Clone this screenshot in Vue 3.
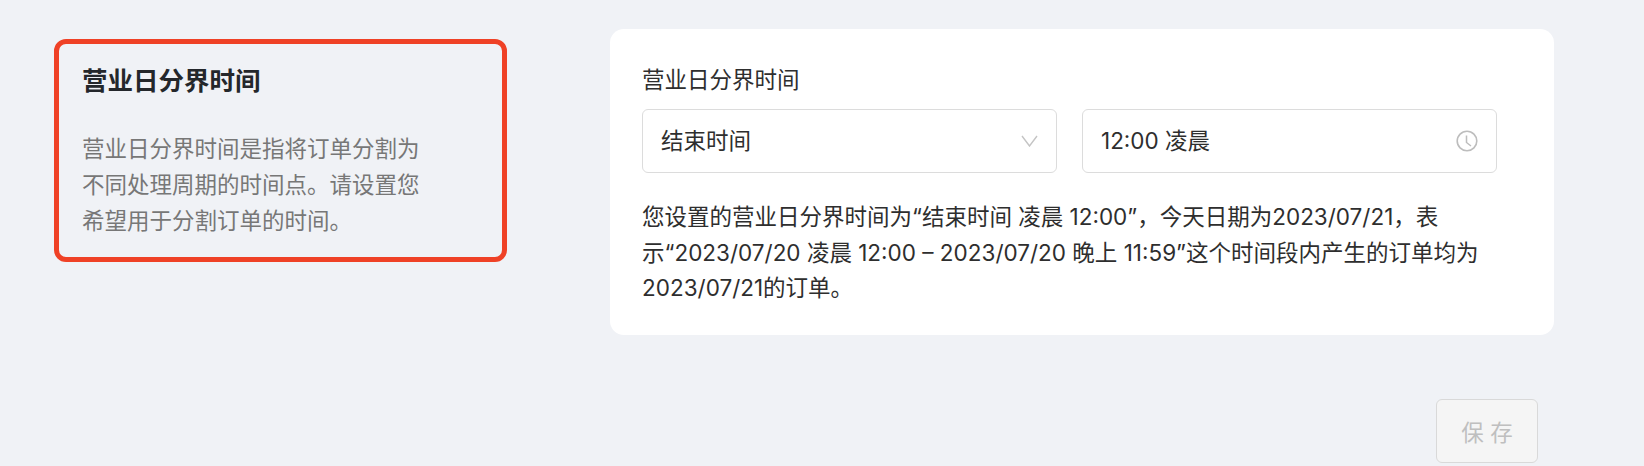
<template>
  <div class="page">
    <div class="setting-row">
      <div class="intro-box">
        <h3 class="intro-title">营业日分界时间</h3>
        <p class="intro-text">营业日分界时间是指将订单分割为不同处理周期的时间点。请设置您希望用于分割订单的时间。</p>
      </div>

      <div class="form-card">
        <div class="form-label">营业日分界时间</div>
        <div class="input-group">
          <div class="field select-field">
            <span>结束时间</span>
            <svg class="arrow" width="17" height="12" viewBox="0 0 17 12" fill="none">
              <path d="M1 1 L8.5 11 L16 1" stroke="#c4c4c4" stroke-width="1.4" />
            </svg>
          </div>
          <div class="field time-field">
            <span>12:00 凌晨</span>
            <svg class="clock" width="22" height="22" viewBox="0 0 22 22" fill="none">
              <circle cx="11" cy="11" r="9.8" stroke="#bdbdbd" stroke-width="1.6" />
              <path d="M10.5 5.5 V12.5 L15 16" stroke="#bdbdbd" stroke-width="1.5" />
            </svg>
          </div>
        </div>
        <p class="form-desc">{{ description }}</p>
      </div>
    </div>

    <div class="footer">
      <button type="button" class="save-btn" disabled>保 存</button>
    </div>
  </div>
</template>

<script setup>
const description = '您设置的营业日分界时间为“结束时间 凌晨 12:00”，今天日期为2023/07/21，表示“2023/07/20 凌晨 12:00 – 2023/07/20 晚上 11:59”这个时间段内产生的订单均为2023/07/21的订单。'
</script>

<style>
html,
body {
  margin: 0;
  background: #f0f2f6;
}
</style>

<style scoped>
.page {
  width: 1644px;
  height: 466px;
  box-sizing: border-box;
  padding: 29px 90px 0 54px;
  background: #f0f2f6;
  overflow: hidden;
  font-family: Inter, "Noto Sans CJK SC", sans-serif;
  color: #2e2e2e;
}

.setting-row {
  display: flex;
  align-items: flex-start;
  gap: 103px;
}

.intro-box {
  width: 453px;
  height: 223px;
  margin-top: 10px;
  flex-shrink: 0;
  box-sizing: border-box;
  padding: 20px 23px;
  border: 5.5px solid #ef4126;
  border-radius: 12px;
}

.intro-title {
  margin: 0 0 33px;
  font-size: 25.5px;
  line-height: 34px;
  font-weight: 700;
  color: #24272b;
}

.intro-text {
  margin: 0;
  width: 345px;
  font-size: 22.5px;
  line-height: 36px;
  color: #777;
}

.form-card {
  width: 944px;
  height: 306px;
  box-sizing: border-box;
  padding: 34px 32px 0;
  background: #fff;
  border-radius: 14px;
}

.form-label {
  font-size: 22.5px;
  line-height: 34px;
  margin-bottom: 12px;
}

.input-group {
  display: flex;
  gap: 25px;
  margin-bottom: 26px;
}

.field {
  display: flex;
  align-items: center;
  justify-content: space-between;
  width: 415px;
  height: 64px;
  box-sizing: border-box;
  padding: 0 18px 4px 18px;
  border: 1.5px solid #dcdcdc;
  border-radius: 6px;
  font-size: 22.5px;
}

.field svg {
  margin-top: 4px;
}

.form-desc {
  margin: 0;
  width: 840px;
  font-size: 22.5px;
  line-height: 35.5px;
}

.footer {
  display: flex;
  justify-content: flex-end;
  margin-top: 64px;
  padding-right: 16px;
}

.save-btn {
  width: 102px;
  height: 64px;
  padding: 0;
  border: 1.5px solid #d9d9d9;
  border-radius: 6px;
  background: #f5f5f5;
  color: #bfbfbf;
  font-family: inherit;
  font-size: 22.5px;
}
</style>
